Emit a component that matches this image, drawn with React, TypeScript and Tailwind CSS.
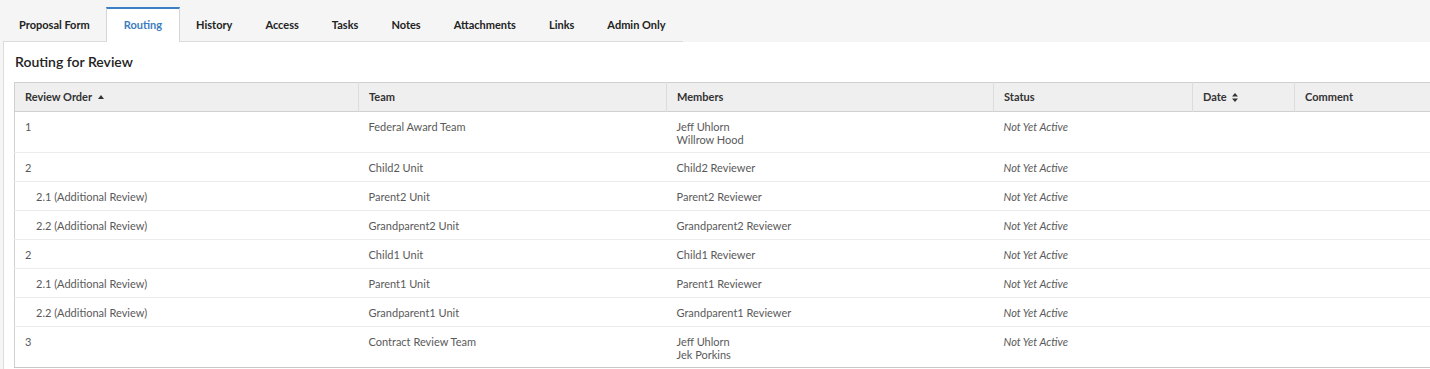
import { ReactNode } from "react";

const tabs = ["Proposal Form", "Routing", "History", "Access", "Tasks", "Notes", "Attachments", "Links", "Admin Only"];

type Row = { order: string; sub?: boolean; team: string; members: string[] };

const rows: Row[] = [
  { order: "1", team: "Federal Award Team", members: ["Jeff Uhlorn", "Willrow Hood"] },
  { order: "2", team: "Child2 Unit", members: ["Child2 Reviewer"] },
  { order: "2.1 (Additional Review)", sub: true, team: "Parent2 Unit", members: ["Parent2 Reviewer"] },
  { order: "2.2 (Additional Review)", sub: true, team: "Grandparent2 Unit", members: ["Grandparent2 Reviewer"] },
  { order: "2", team: "Child1 Unit", members: ["Child1 Reviewer"] },
  { order: "2.1 (Additional Review)", sub: true, team: "Parent1 Unit", members: ["Parent1 Reviewer"] },
  { order: "2.2 (Additional Review)", sub: true, team: "Grandparent1 Unit", members: ["Grandparent1 Reviewer"] },
  { order: "3", team: "Contract Review Team", members: ["Jeff Uhlorn", "Jek Porkins"] },
];

function SortUp() {
  return (
    <svg width="6" height="4" viewBox="0 0 6 4" className="inline-block ml-[6px] mb-[2px]">
      <path d="M0 4 L3 0 L6 4 Z" fill="#333" />
    </svg>
  );
}

function SortBoth() {
  return (
    <svg width="6" height="9" viewBox="0 0 6 9" className="inline-block ml-[5px] mb-[1px]">
      <path d="M0 3.5 L3 0 L6 3.5 Z M0 5.5 L3 9 L6 5.5 Z" fill="#333" />
    </svg>
  );
}

function Th({ w, children, last }: { w: string; children: ReactNode; last?: boolean }) {
  return (
    <th className={`${w} text-left font-bold text-[11px] text-[#333] px-[10px] h-[29px] ${last ? "" : "border-r border-[#dcdcdc]"}`}>
      {children}
    </th>
  );
}

export default function App() {
  return (
    <div className="h-[369px] w-[1430px] overflow-hidden bg-[#f5f5f5]" style={{ fontFamily: "Lato, 'Open Sans', sans-serif" }}>
      <div className="pt-[7px] pl-[3px]">
        <div className="flex w-fit min-w-[680px] border-b border-[#dcdcdc]">
          {tabs.map((t) => {
            const active = t === "Routing";
            return (
              <div
                key={t}
                className={`shrink-0 whitespace-nowrap px-[16.5px] first:pl-[16px] h-[35px] flex items-center text-[11px] font-bold -mb-px ${
                  active
                    ? "bg-white text-[#3d7cbf] border-t-2 border-t-[#3b80c6] border-x border-x-[#d6d6d6] pb-[1px]"
                    : "text-[#222] border-t-2 border-t-transparent"
                }`}
              >
                {t}
              </div>
            );
          })}
        </div>
      </div>
      <div className="ml-[3px] bg-white border-l border-[#dcdcdc] h-full pl-[10px]">
        <h2 className="pt-[10px] pl-[1px] h-[40px] text-[14px] leading-[20px] font-semibold text-[#222]">Routing for Review</h2>
        <table className="w-[1430px] table-fixed border-collapse border-l border-[#d0d0d0]">
          <thead>
            <tr className="bg-[#efefef] border-y border-[#d0d0d0]">
              <Th w="w-[344px]">
                Review Order
                <SortUp />
              </Th>
              <Th w="w-[308px]">Team</Th>
              <Th w="w-[327px]">Members</Th>
              <Th w="w-[199px]">Status</Th>
              <Th w="w-[102px]">
                Date
                <SortBoth />
              </Th>
              <Th w="w-auto" last>
                Comment
              </Th>
            </tr>
          </thead>
          <tbody className="text-[11px] text-[#5a5a5a] leading-[13px]">
            {rows.map((r, i) => (
              <tr key={i} className={i === rows.length - 1 ? "border-b border-[#c8c8c8]" : "border-b border-[#ececec]"}>
                <td className={`align-top pt-[8px] pb-[7px] ${r.sub ? "pl-[21px]" : "pl-[10px]"}`}>{r.order}</td>
                <td className="align-top pt-[8px] pb-[7px] px-[10px]">{r.team}</td>
                <td className="align-top pt-[8px] pb-[6px] px-[10px]">
                  {r.members.map((m) => (
                    <div key={m}>{m}</div>
                  ))}
                </td>
                <td className="align-top pt-[8px] pb-[7px] px-[10px] italic">Not Yet Active</td>
                <td className="align-top pt-[8px] pb-[7px] px-[10px]"></td>
                <td className="align-top pt-[8px] pb-[7px] px-[10px]"></td>
              </tr>
            ))}
          </tbody>
        </table>
      </div>
    </div>
  );
}
